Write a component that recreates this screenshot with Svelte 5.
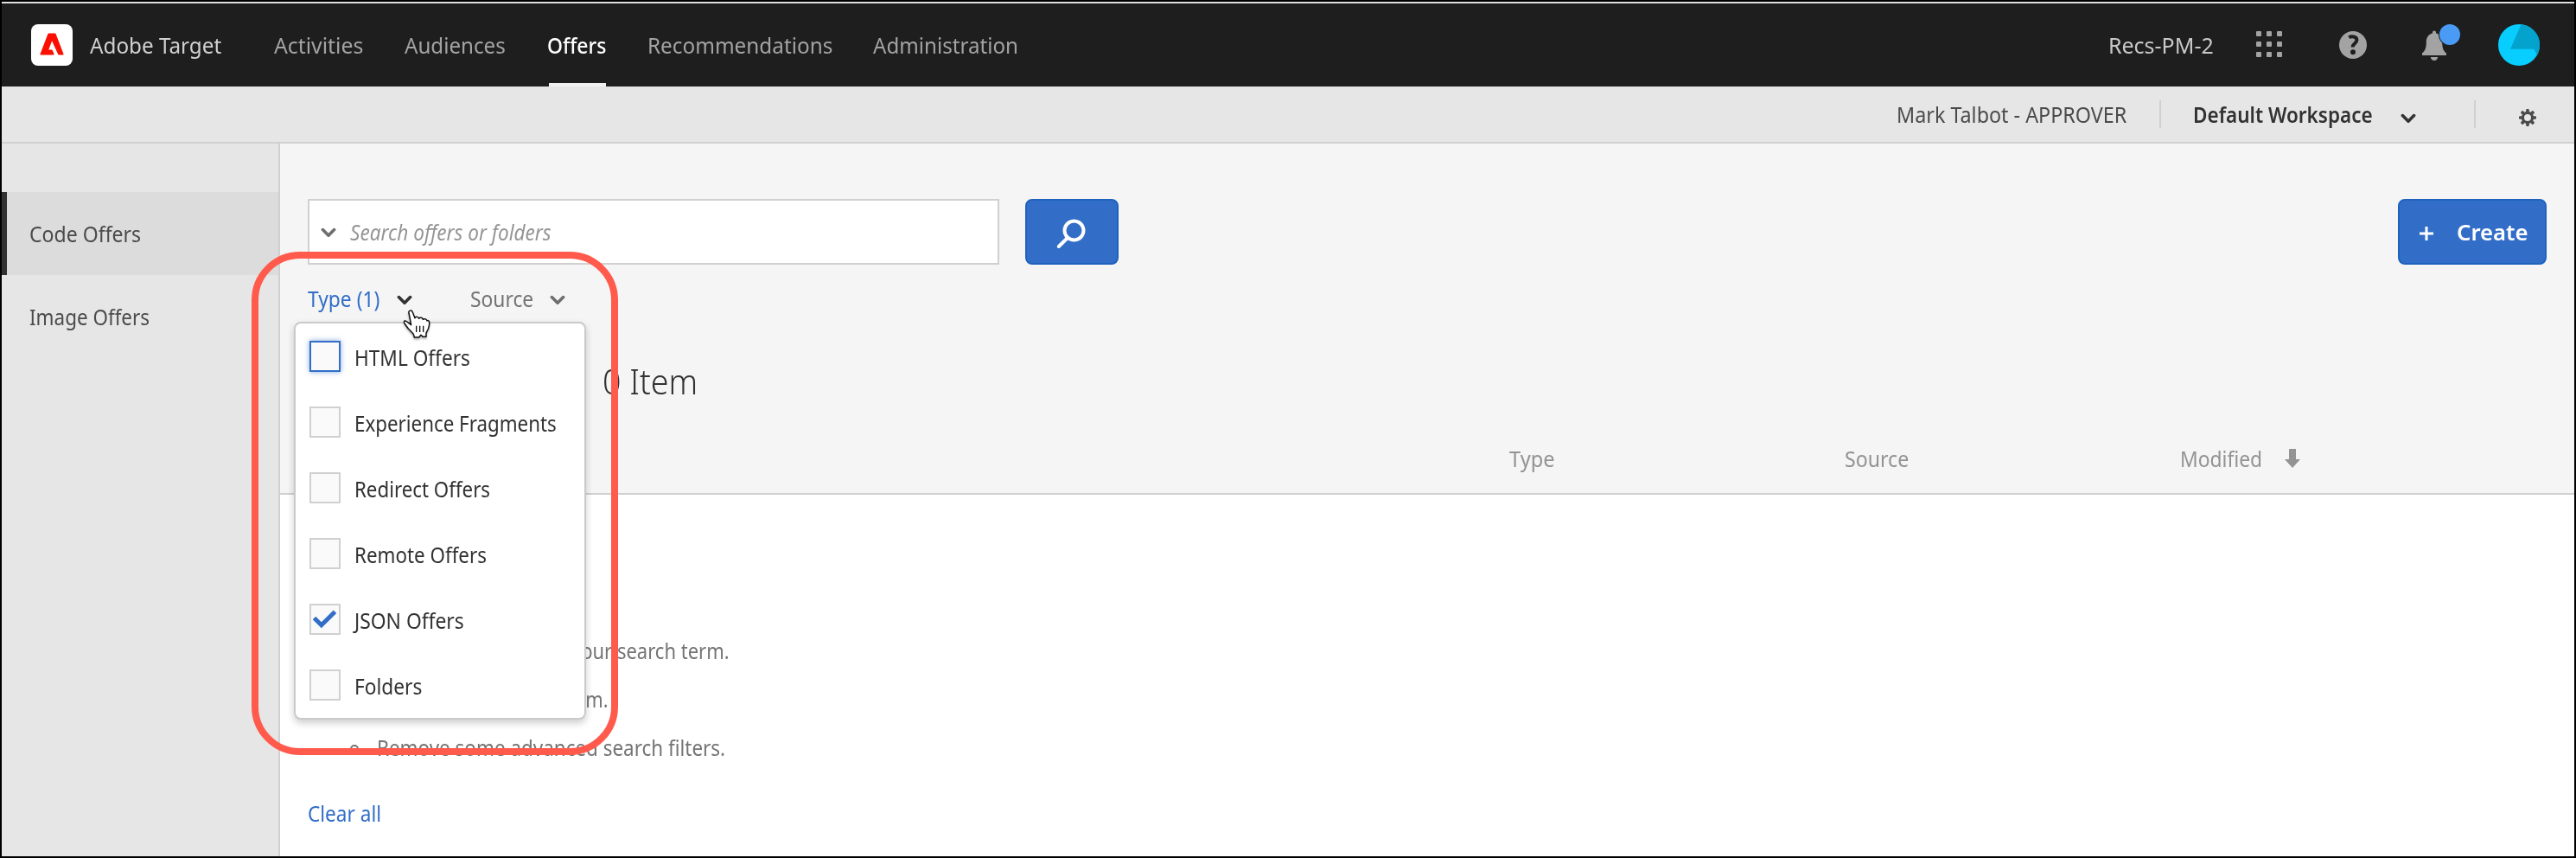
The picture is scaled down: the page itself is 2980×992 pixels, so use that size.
<script>
  const nav = [
    { label: 'Activities', width: 103, gap: 61 },
    { label: 'Audiences', width: 117, gap: 48 },
    { label: 'Offers', width: 68, gap: 48, active: true },
    { label: 'Recommendations', width: 214, gap: 48 },
    { label: 'Administration', width: 168, gap: 47 },
  ];
  const types = [
    { label: 'HTML Offers', width: 134, focused: true },
    { label: 'Experience Fragments', width: 234 },
    { label: 'Redirect Offers', width: 157 },
    { label: 'Remote Offers', width: 153 },
    { label: 'JSON Offers', width: 127, checked: true },
    { label: 'Folders', width: 78 },
  ];
  const hints = [
    { label: 'your search term.', width: 183, indent: 225 },
    { label: 'term.', width: 56, indent: 212 },
    { label: 'Remove some advanced search filters.', width: 403, indent: 0 },
  ];
  const teeth = [0, 45, 90, 135, 180, 225, 270, 315];
  const dots = [3, 15, 27];

  // Condenses a label horizontally to the width of its box.
  function condense(node) {
    node.style.transform = `scaleX(${node.parentNode.clientWidth / node.offsetWidth})`;
  }
</script>

{#snippet text(label, width)}
  <span class="text" style="width:{width}px"><span class="glyphs" use:condense>{label}</span></span>
{/snippet}

{#snippet chevron(cls)}
  <svg class="chevron {cls}" width="18" height="12" viewBox="0 0 18 12"><path d="M2.4 2.6 9 9.2l6.6-6.6" /></svg>
{/snippet}

<div class="screen">
  <header class="topbar">
    <svg class="logo" width="48" height="48" viewBox="0 0 48 48">
      <rect width="48" height="48" rx="8" fill="#fff" />
      <path d="M10.800 35 20 11h8l9.200 24h-5.400L24 18 19.600 30h4.600l2 5z" fill="#fa0f00" stroke="#fa0f00" stroke-width="1" stroke-linejoin="round" />
    </svg>
    <span class="brand">{@render text('Adobe Target', 152)}</span>
    <nav>
      {#each nav as item}
        <a class="navlink" class:active={item.active} style="margin-left:{item.gap}px">{@render text(item.label, item.width)}</a>
      {/each}
    </nav>
    <div class="account">
      <span class="org">{@render text('Recs-PM-2', 122)}</span>
      <svg class="apps" width="30" height="30" viewBox="3 3 30 30" fill="#a3a3a3">
        {#each dots as y}{#each dots as x}<rect {x} {y} width="6" height="6" rx="1" />{/each}{/each}
      </svg>
      <svg class="help" width="32" height="32" viewBox="0 0 32 32">
        <circle cx="16" cy="16" r="16" fill="#a3a3a3" />
        <path d="M11.400 7.400c2-1.500 9-2 9 2.800 0 4-4.800 4.200-4.800 8.400" fill="none" stroke="#1e1e1e" stroke-width="4" />
        <circle cx="16" cy="24.300" r="3" fill="#1e1e1e" />
      </svg>
      <svg class="bell" width="44" height="44" viewBox="0 0 44 44">
        <path d="M12 10.500V9.500a2 2 0 0 1 4 0v1c4.500 1 7.200 4.800 7.200 10 0 7.500 1.300 10 4.800 13V36H0v-2.500c3.500-3 4.800-5.500 4.800-13 0-5.200 2.700-9 7.200-10z" fill="#a3a3a3" />
        <path d="M9.800 38h8.400c-.4 2.600-2 4-4.200 4s-3.800-1.400-4.200-4z" fill="#a3a3a3" />
        <circle cx="32" cy="12" r="13" fill="#1e1e1e" />
        <circle cx="32" cy="12" r="12" fill="#4a9bf5" />
      </svg>
      <svg class="avatar" width="48" height="48" viewBox="0 0 48 48">
        <clipPath id="disc"><circle cx="24" cy="24" r="24" /></clipPath>
        <g clip-path="url(#disc)">
          <rect width="48" height="48" fill="#08ceff" />
          <path d="M27.500-2 14 28.800h27.300l4.500 8.500H50V-2z" fill="#04a3cd" />
        </g>
      </svg>
    </div>
  </header>

  <div class="subbar">
    <span class="user">{@render text('Mark Talbot - APPROVER', 266)}</span>
    <i class="rule"></i>
    <span class="workspace">{@render text('Default Workspace', 208)}</span>
    {@render chevron('dark ws')}
    <i class="rule second"></i>
    <svg class="gear" width="20" height="20" viewBox="-10 -10 20 20" fill="#4b4b4b">
      {#each teeth as angle}<rect x="-1.800" y="-10" width="3.600" height="5" rx="1" transform="rotate({angle})" />{/each}
      <circle r="5.600" fill="none" stroke="#4b4b4b" stroke-width="3.200" />
    </svg>
  </div>

  <div class="body">
    <aside>
      <a class="side current">{@render text('Code Offers', 129)}</a>
      <a class="side">{@render text('Image Offers', 139)}</a>
    </aside>

    <main>
      <section class="head">
        <div class="toolbar">
          <div class="search">
            {@render chevron('mid')}
            <span class="placeholder">{@render text('Search offers or folders', 233)}</span>
          </div>
          <button class="primary find" aria-label="Search">
            <svg width="36" height="36" viewBox="0 0 36 36" fill="none" stroke="#fff" stroke-width="4">
              <circle cx="21.500" cy="14.500" r="11" /><path d="M13.500 23.500 3.800 33" stroke-linecap="round" />
            </svg>
          </button>
          <button class="primary create">
            <svg width="16" height="16" viewBox="0 0 16 16"><path d="M8 0v16M0 8h16" stroke="#fff" stroke-width="3" /></svg>
            {@render text('Create', 83)}
          </button>
        </div>

        <div class="filters">
          <span class="filter open">{@render text('Type (1)', 83)}</span>
          {@render chevron('dark first')}
          <span class="filter">{@render text('Source', 73)}</span>
          {@render chevron('mid last')}

          <div class="menu">
            {#each types as t}
              <div class="option">
                <span class="box" class:focused={t.focused}>
                  {#if t.checked}
                    <svg width="32" height="32" viewBox="0 0 32 32"><path d="M3.500 14.500 11.800 22.800 27.500 7.200" fill="none" stroke="#326ec8" stroke-width="5" /></svg>
                  {/if}
                </span>
                <span class="name">{@render text(t.label, t.width)}</span>
              </div>
            {/each}
          </div>
          <div class="outline"></div>
          <svg class="cursor" width="32" height="34" viewBox="0 0 96 102">
            <path d="M21 12C18 2 31 0 34 9l8 20c3-6 12-5 14 2 4-5 12-4 14 3 5-4 13-1 14 5 6-4 9 3 8 12-1 10-4 20-11 30v13H69l-6-6-7 8H40l-3-11C30 78 24 70 19 66L6 48C1 38 9 36 16 43l13 10z" fill="#fff" stroke="#111" stroke-width="4.500" stroke-linejoin="round" />
            <path d="M47 56v22M59 56v22M71 56v22" stroke="#111" stroke-width="4" />
          </svg>
        </div>

        <div class="count">{@render text('0 Item', 110)}</div>

        <div class="columns">
          <span></span>
          <span>{@render text('Type', 53)}</span>
          <span>{@render text('Source', 74)}</span>
          <span class="sorted">
            {@render text('Modified', 95)}
            <svg width="18" height="22" viewBox="0 0 18 22"><path d="M5 0h8v12h5L9 22 0 12h5z" fill="#939393" /></svg>
          </span>
        </div>
      </section>

      <section class="empty">
        <ul>
          {#each hints as h}
            <li><i class="bullet" style="margin-right:{21 + h.indent}px"></i>{@render text(h.label, h.width)}</li>
          {/each}
        </ul>
        <a class="clear">{@render text('Clear all', 85)}</a>
      </section>
    </main>
  </div>
</div>

<style>
  :global(body) { margin: 0; overflow: hidden; }
  .screen, .screen * { box-sizing: border-box; }
  .screen {
    width: 2980px; height: 992px; border: 2px solid #000; background: #fff;
    display: flex; flex-direction: column; overflow: hidden;
    font: 25px/40px "Noto Sans", sans-serif; color: #4b4b4b;
  }
  .text { display: inline-block; flex: none; white-space: nowrap; text-align: left; height: 40px; }
  .glyphs { display: inline-block; transform-origin: 0 50%; }
  svg { display: block; flex: none; }

  .topbar {
    height: 98px; flex: none; display: flex; align-items: center; padding: 0 40px 0 34px;
    background: #1e1e1e; border-top: 2px solid #e0e0e0; font-size: 26px;
  }
  .brand { margin-left: 20px; color: #d0d0d0; display: flex; }
  nav { display: flex; align-self: stretch; }
  .navlink { display: flex; align-items: center; color: #a3a3a3; }
  .active { color: #fff; font-weight: 500; background: linear-gradient(#f0f0f0, #f0f0f0) 2px 100% / 68px 4px no-repeat; }
  .account { margin-left: auto; display: flex; align-items: center; color: #c8c8c8; }
  .org { display: flex; }
  .apps { margin: -2px 0 0 49px; }
  .help { margin-left: 66px; }
  .bell { margin: -4px 0 0 64px; }
  .avatar { margin-left: 44px; }

  .subbar {
    height: 66px; flex: none; display: flex; align-items: center; justify-content: flex-end; padding-right: 44px;
    background: #e6e6e6; border-bottom: 2px solid #d0d0d0;
  }
  .user, .workspace { display: flex; }
  .rule { width: 2px; height: 32px; background: #d0d0d0; margin-left: 38px; }
  .workspace { color: #323232; font-weight: 600; margin-left: 37px; }
  .ws { margin: 9px 0 0 32px; }
  .second { margin-left: 67px; }
  .gear { margin: 8px 0 0 50px; }

  .chevron path { fill: none; stroke-width: 3.6; stroke-linecap: round; stroke-linejoin: round; }
  .dark path { stroke: #323232; }
  .mid path { stroke: #6e6e6e; }

  .body { flex: 1; display: flex; min-height: 0; }
  aside { width: 322px; flex: none; background: #e6e6e6; border-right: 2px solid #d0d0d0; padding-top: 56px; }
  .side { display: flex; align-items: center; height: 96px; padding-left: 32px; }
  .current { background: #dcdcdc; border-left: 6px solid #323232; padding-left: 26px; }
  main { flex: 1; display: flex; flex-direction: column; min-width: 0; }

  .head { height: 406px; flex: none; background: #f5f5f5; border-bottom: 2px solid #d0d0d0; padding: 64px 32px 0; }
  .toolbar { display: flex; height: 76px; }
  .search { width: 800px; background: #fff; border: 2px solid #d0d0d0; display: flex; align-items: center; padding-left: 13px; }
  .search .chevron { margin-top: 2px; }
  .placeholder { display: flex; margin-left: 16px; color: #959595; font-style: italic; }
  .primary {
    display: flex; align-items: center; margin: 0; padding: 0; border: 2px solid #1f62bd; border-radius: 8px;
    background: #326ec8; color: #fff; font: inherit; font-weight: 600;
  }
  .find { width: 108px; margin-left: 30px; padding: 4px 0 0 33px; }
  .create { width: 172px; margin-left: auto; padding-left: 23px; gap: 27px; font-size: 26px; }
  .create svg { margin-top: 3px; }

  .filters { position: relative; z-index: 1; height: 77px; display: flex; align-items: center; color: #747474; }
  .filter { display: flex; }
  .open { color: #326ec8; }
  .first { margin: 5px 67px 0 20px; }
  .last { margin: 5px 0 0 19px; }
  .menu {
    position: absolute; left: -16px; top: 66px; width: 338px; background: #fff; border: 2px solid #cacaca;
    border-radius: 8px; box-shadow: 0 4px 8px rgba(0, 0, 0, .2); color: #323232;
  }
  .option { height: 76px; display: flex; align-items: center; padding-left: 16px; }
  .box { width: 36px; height: 36px; border: 2px solid #d0d0d0; background: #fafafa; }
  .focused { border-color: #326ec8; box-shadow: 0 0 6px rgba(50, 110, 200, .6); }
  .name { display: flex; margin: 2px 0 0 16px; }
  .outline { position: absolute; left: -65px; top: -15px; width: 424px; height: 582px; border: 8px solid #ff5a4c; border-radius: 56px; }
  .cursor { position: absolute; left: 110px; top: 52px; filter: drop-shadow(0 2px 1px rgba(0, 0, 0, .3)); }

  .count { height: 115px; display: flex; align-items: center; padding-left: 341px; font-size: 40px; font-weight: 300; color: #323232; }
  .columns { display: grid; grid-template-columns: 1390px 388px 388px 1fr; align-items: center; height: 64px; color: #939393; }
  .columns span { display: flex; }
  .columns .sorted { align-items: center; }
  .columns .text, .columns .glyphs { display: inline-block; }
  .sorted svg { margin: -1px 0 0 26px; }

  .empty { padding: 152px 32px 0; color: #747474; }
  ul { list-style: none; margin: 0; padding: 0 0 0 49px; }
  li { height: 56px; display: flex; align-items: center; }
  .bullet { flex: none; width: 10px; height: 10px; border: 2px solid #747474; border-radius: 50%; margin-top: 4px; }
  .clear { display: flex; align-items: center; height: 96px; color: #326ec8; }
</style>
